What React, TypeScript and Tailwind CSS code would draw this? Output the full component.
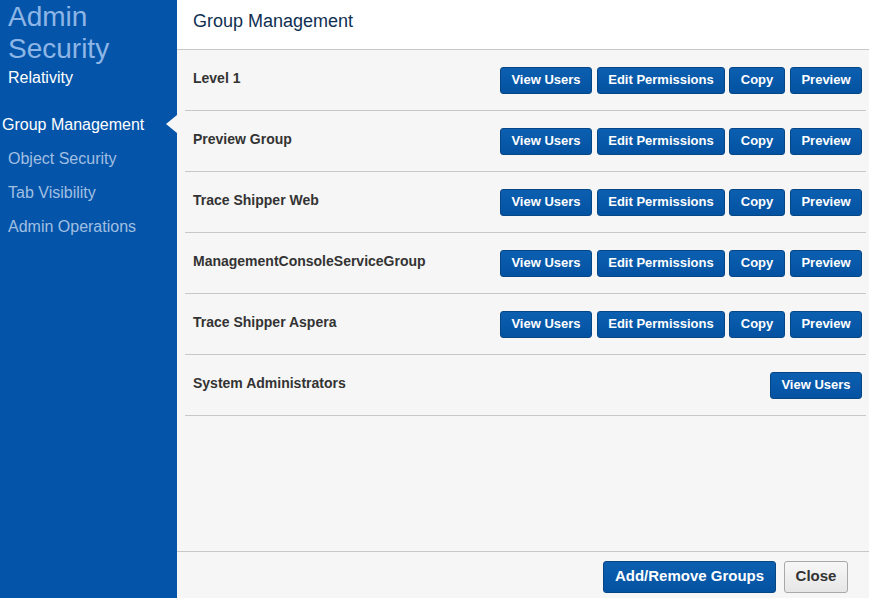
const groups = [
  { name: "Level 1", full: true },
  { name: "Preview Group", full: true },
  { name: "Trace Shipper Web", full: true },
  { name: "ManagementConsoleServiceGroup", full: true },
  { name: "Trace Shipper Aspera", full: true },
  { name: "System Administrators", full: false },
]

const nav = ["Group Management", "Object Security", "Tab Visibility", "Admin Operations"]

const Btn = ({ children, className = "" }: { children: React.ReactNode; className?: string }) => (
  <button
    className={`h-[27px] rounded-[3px] border border-[#054685] bg-gradient-to-b from-[#0c5fb0] to-[#0452a2] text-[13px] font-bold text-white ${className}`}
  >
    {children}
  </button>
)

export default function App() {
  return (
    <div className="flex h-[598px] w-[869px] overflow-hidden font-['Liberation_Sans',Arial,sans-serif]">
      <aside className="w-[177px] shrink-0 bg-[#0455a9]">
        <div className="px-2 pt-[1px]">
          <div className="text-[28px] leading-[32px] text-[#8db5e6]">Admin</div>
          <div className="text-[28px] leading-[32px] text-[#8db5e6]">Security</div>
          <div className="mt-[3px] text-[16px] leading-[20px] text-white">Relativity</div>
        </div>
        <nav className="mt-[20px] flex flex-col">
          {nav.map((n, i) => (
            <div key={n} className="relative flex h-[34px] items-center">
              <span
                className={
                  i === 0
                    ? "pl-[2px] text-[16px] text-white"
                    : "pl-2 text-[16px] text-[#a1bfe2]"
                }
              >
                {n}
              </span>
              {i === 0 && (
                <span className="absolute right-0 top-[7px] h-0 w-0 border-y-[9px] border-r-[11px] border-y-transparent border-r-[#f6f6f6]" />
              )}
            </div>
          ))}
        </nav>
      </aside>
      <main className="flex flex-1 flex-col bg-[#f6f6f6]">
        <header className="flex h-[50px] shrink-0 items-center border-b border-[#c8c8c8] bg-white px-4 pb-[7px]">
          <h1 className="text-[18px] text-[#0f2f52]">Group Management</h1>
        </header>
        <div className="flex-1 pl-2 pr-[3px]">
          {groups.map((g) => (
            <div
              key={g.name}
              className="flex h-[61px] items-center justify-between border-b border-[#c8c8c8] pl-2 pr-[4px]"
            >
              <span className="-mt-[4px] text-[14px] font-bold text-[#333]">{g.name}</span>
              <div className="flex gap-[5px]">
                <Btn className="w-[92px]">View Users</Btn>
                {g.full && (
                  <>
                    <Btn className="w-[128px]">Edit Permissions</Btn>
                    <Btn className="ml-[-1px] w-[56px]">Copy</Btn>
                    <Btn className="w-[72px]">Preview</Btn>
                  </>
                )}
              </div>
            </div>
          ))}
        </div>
        <footer className="flex h-[47px] shrink-0 items-center justify-end gap-2 border-t border-[#c8c8c8] pr-[21px] pt-[3px]">
          <button className="h-[32px] w-[173px] rounded-[3px] border border-[#054685] bg-gradient-to-b from-[#0c5fb0] to-[#0452a2] text-[15px] font-bold text-white">
            Add/Remove Groups
          </button>
          <button className="h-[32px] w-[64px] rounded-[3px] border border-[#a8a8a8] bg-gradient-to-b from-[#f7f7f7] to-[#e6e6e6] text-[15px] font-bold text-[#333]">
            Close
          </button>
        </footer>
      </main>
    </div>
  )
}
